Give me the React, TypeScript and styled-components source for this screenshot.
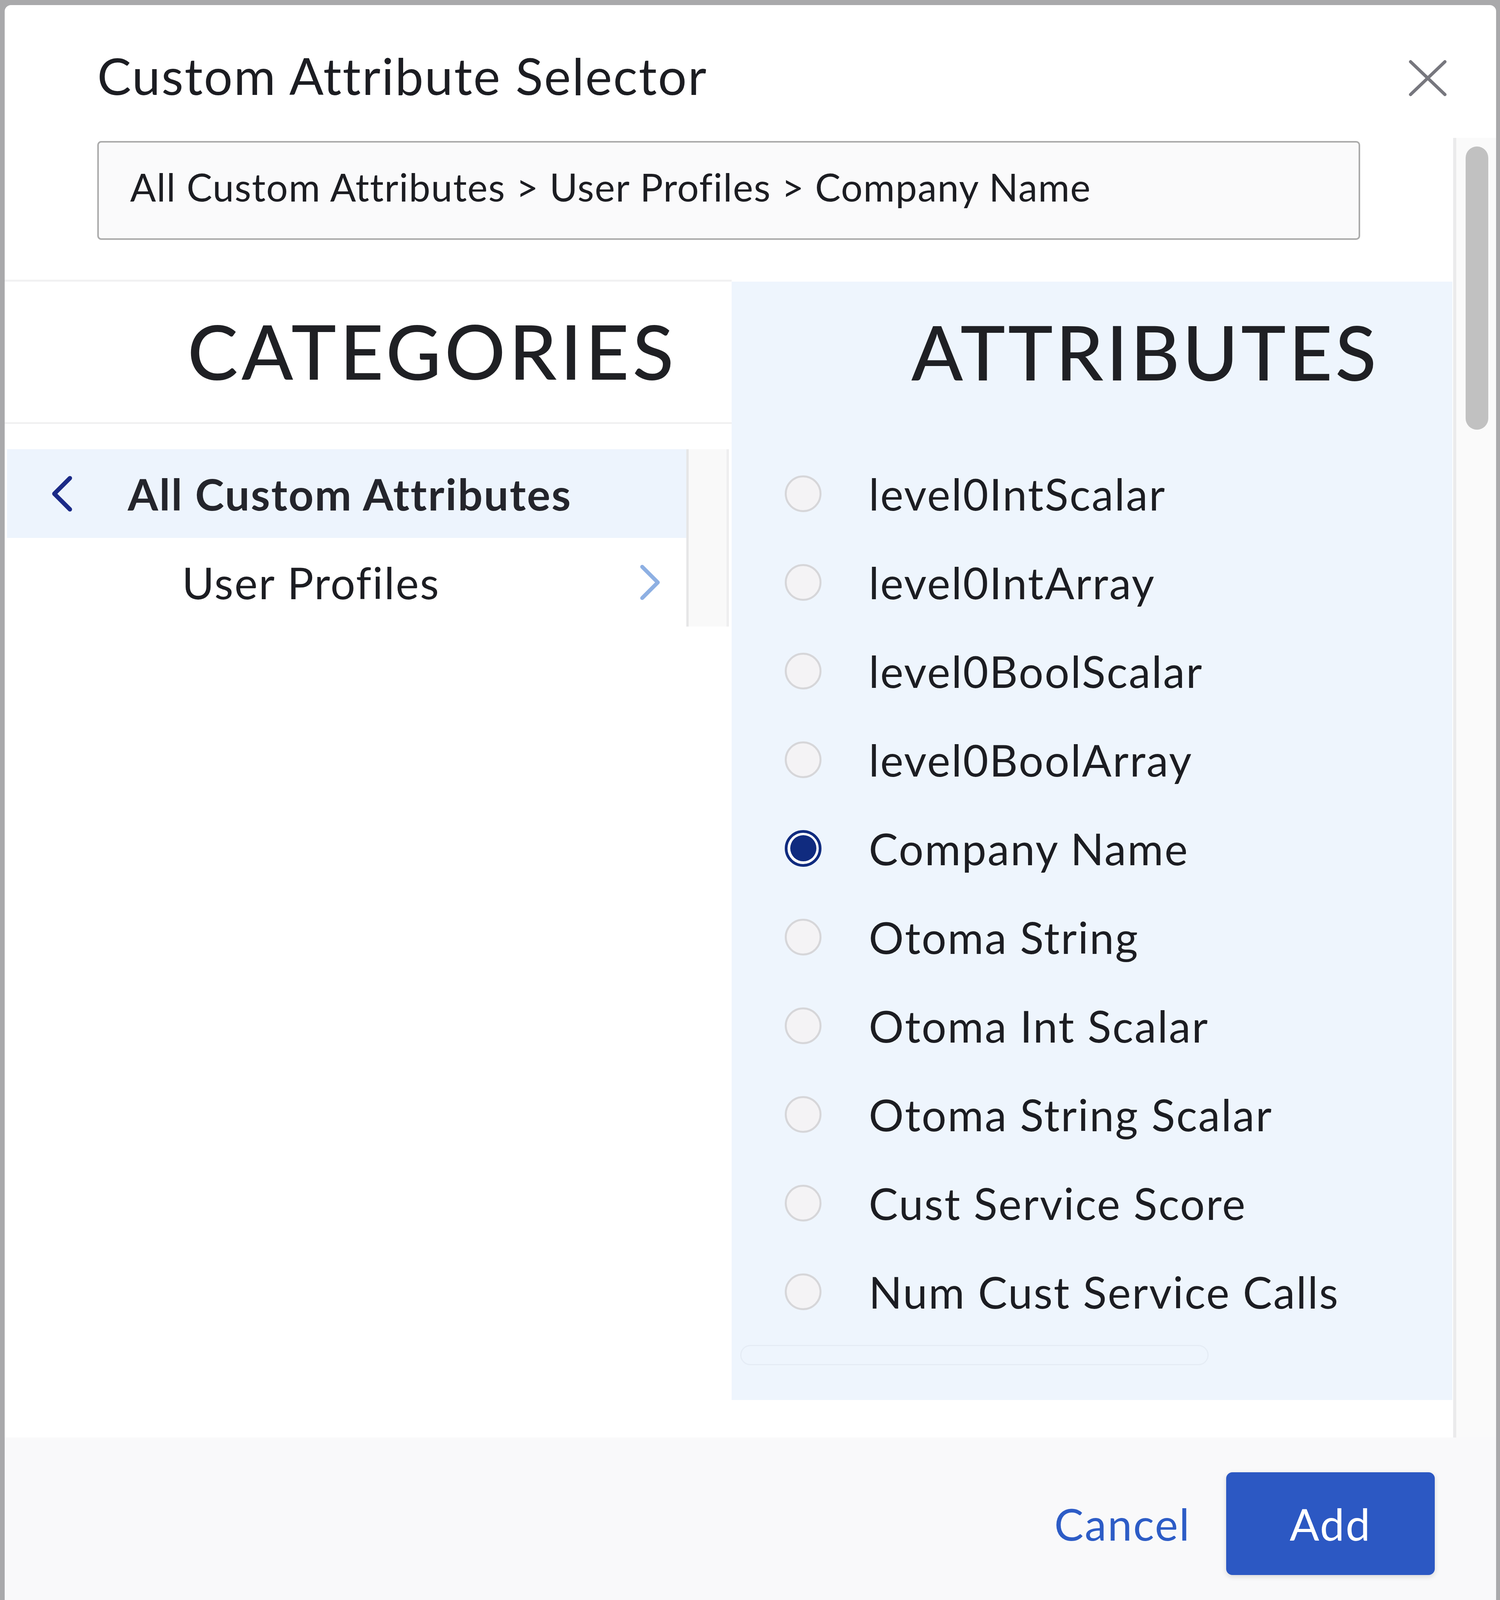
import styled, { createGlobalStyle } from 'styled-components'

const GlobalStyle = createGlobalStyle`
	html, body {
		margin: 0;
		padding: 0;
		background: #a9a9ab;
	}
	* {
		box-sizing: border-box;
	}
	body {
		font-family: Lato, 'Open Sans', 'Liberation Sans', sans-serif;
		color: #1c1d22;
	}
`

const Frame = styled.div`
	height: 100vh;
	padding: 13px 10px 0 12px;
	background: #a9a9ab;
	overflow: hidden;
`

const Modal = styled.div`
	height: 100%;
	background: #ffffff;
	border-radius: 16px 16px 0 0;
	display: flex;
	flex-direction: column;
`

const Header = styled.header`
	height: 340px;
	flex-shrink: 0;
	display: flex;
	align-items: center;
	justify-content: space-between;
	padding: 20px 126px 0 237px;
`

const Title = styled.h1`
	margin: 0;
	font-size: 130px;
	font-weight: 400;
	letter-spacing: 3px;
	color: #1c1d22;
`

const CloseButton = styled.button`
	width: 98px;
	height: 94px;
	padding: 0;
	border: 0;
	background: none;
	display: flex;
	margin-top: 14px;
`

const Main = styled.div`
	height: 3327px;
	flex-shrink: 0;
	display: flex;
`

const Content = styled.div`
	flex: 1;
	min-width: 0;
	display: flex;
	flex-direction: column;
`

const Breadcrumb = styled.div`
	margin: 8px 0 0 237px;
	width: 3233px;
	height: 253px;
	border: 4px solid #ababab;
	border-radius: 10px;
	background: #fafafb;
	display: flex;
	align-items: center;
	padding: 0 0 19px 80px;
	font-size: 98px;
	letter-spacing: 1.8px;
	color: #1c1d22;
`

const Columns = styled.div`
	margin-top: 102px;
	display: flex;
	align-items: flex-start;
`

const CategoryColumn = styled.section`
	width: 1861px;
	flex-shrink: 0;
	border-top: 5px solid #f1f1f2;
`

const AttributeColumn = styled.section`
	flex: 1;
	margin: 5px 2px 0 0;
	background: #eef5fd;
	padding-bottom: 89px;
`

const ColumnHeading = styled.h2<{ $indent: number; $divider?: boolean }>`
	margin: 0;
	height: ${({ $divider }) => ($divider ? 364 : 364)}px;
	display: flex;
	align-items: center;
	padding: 0 0 8px ${({ $indent }) => $indent}px;
	font-size: 194px;
	font-weight: 500;
	letter-spacing: ${({ $divider }) => ($divider ? 9 : 7)}px;
	color: #1f2024;
	border-bottom: ${({ $divider }) => ($divider ? '4px solid #efeff0' : '0')};
`

const CategoryList = styled.div`
	margin: 65px 7px 0 6px;
	display: flex;
`

const CategoryItems = styled.div`
	flex: 1;
	display: flex;
	flex-direction: column;
`

const CategoryRow = styled.div<{ $active?: boolean }>`
	height: 227px;
	display: flex;
	align-items: center;
	gap: 138px;
	padding: 0 63px 0 ${({ $active }) => ($active ? 109 : 448)}px;
	background: ${({ $active }) => ($active ? '#edf4fd' : 'transparent')};
	font-size: 112px;
	letter-spacing: 3px;
	font-weight: ${({ $active }) => ($active ? 700 : 400)};
	color: ${({ $active }) => ($active ? '#24252c' : '#1c1d22')};
`

const RowChevron = styled.svg`
	flex-shrink: 0;
	margin-left: auto;
`

const ListTrack = styled.div`
	width: 109px;
	flex-shrink: 0;
	border-left: 6px solid #e6e6e7;
	border-right: 6px solid #eeeeef;
	background: #f9f9f9;
`

const AttributeList = styled.div`
	margin-top: 65px;
	display: flex;
	flex-direction: column;
`

const AttributeRow = styled.label`
	height: 227px;
	display: flex;
	align-items: center;
	gap: 121px;
	padding-left: 136px;
	font-size: 112px;
	letter-spacing: 3px;
	color: #1c1d22;
`

const Radio = styled.span<{ $checked?: boolean }>`
	width: 94px;
	height: 94px;
	flex-shrink: 0;
	border-radius: 50%;
	border: ${({ $checked }) => ($checked ? '7px solid #102b7f' : '5px solid #d6d6d9')};
	background: ${({ $checked }) => ($checked ? '#ffffff' : '#f4f3f5')};
	display: flex;
	align-items: center;
	justify-content: center;

	&::after {
		content: '';
		display: ${({ $checked }) => ($checked ? 'block' : 'none')};
		width: 67px;
		height: 67px;
		border-radius: 50%;
		background: #102b7f;
	}
`

const Placeholder = styled.div`
	margin: 23px 0 0 22px;
	width: 1199px;
	height: 52px;
	border: 3px solid #e5ecf5;
	border-radius: 26px;
`

const ScrollTrack = styled.div`
	width: 110px;
	flex-shrink: 0;
	border-left: 8px solid #ebebec;
	background: #fafafa;
	padding: 22px 0 0 24px;
`

const ScrollThumb = styled.div`
	width: 58px;
	height: 725px;
	border-radius: 29px;
	background: #c1c1c1;
`

const Footer = styled.footer`
	flex: 1;
	background: #f9f9fa;
	display: flex;
	justify-content: flex-end;
	align-items: flex-start;
	gap: 91px;
	padding: 89px 157px 0 0;
`

const CancelButton = styled.button`
	height: 263px;
	padding: 0;
	border: 0;
	background: none;
	font-family: inherit;
	font-size: 112px;
	letter-spacing: 3px;
	color: #2d5cc6;
`

const AddButton = styled.button`
	width: 534px;
	height: 263px;
	border: 0;
	border-radius: 16px;
	background: #2c58c3;
	box-shadow: 0 4px 14px rgba(0, 0, 0, 0.14);
	font-family: inherit;
	font-size: 112px;
	letter-spacing: 3px;
	color: #ffffff;
`

const attributes = [
	'level0IntScalar',
	'level0IntArray',
	'level0BoolScalar',
	'level0BoolArray',
	'Company Name',
	'Otoma String',
	'Otoma Int Scalar',
	'Otoma String Scalar',
	'Cust Service Score',
	'Num Cust Service Calls',
]

const App = () => {
	return (
		<>
			<GlobalStyle />
			<Frame>
				<Modal>
					<Header>
						<Title>Custom Attribute Selector</Title>
						<CloseButton aria-label="Close">
							<svg width="98" height="94" viewBox="0 0 98 94">
								<path d="M5 5 L93 89 M93 5 L5 89" stroke="#77777e" strokeWidth="8" strokeLinecap="round" fill="none" />
							</svg>
						</CloseButton>
					</Header>
					<Main>
						<Content>
							<Breadcrumb>All Custom Attributes &gt; User Profiles &gt; Company Name</Breadcrumb>
							<Columns>
								<CategoryColumn>
									<ColumnHeading $indent={468} $divider>
										CATEGORIES
									</ColumnHeading>
									<CategoryList>
										<CategoryItems>
											<CategoryRow $active>
												<svg width="62" height="92" viewBox="0 0 62 92">
													<polyline
														points="52,6 12,46 52,86"
														stroke="#1b2a87"
														strokeWidth="11"
														strokeLinecap="round"
														strokeLinejoin="round"
														fill="none"
													/>
												</svg>
												All Custom Attributes
											</CategoryRow>
											<CategoryRow>
												User Profiles
												<RowChevron width="58" height="92" viewBox="0 0 58 92">
													<polyline
														points="8,6 48,46 8,86"
														stroke="#8eb0e3"
														strokeWidth="10"
														strokeLinecap="round"
														strokeLinejoin="round"
														fill="none"
													/>
												</RowChevron>
											</CategoryRow>
										</CategoryItems>
										<ListTrack />
									</CategoryList>
								</CategoryColumn>
								<AttributeColumn>
									<ColumnHeading $indent={460}>ATTRIBUTES</ColumnHeading>
									<AttributeList>
										{attributes.map((name) => (
											<AttributeRow key={name}>
												<Radio $checked={name === 'Company Name'} />
												{name}
											</AttributeRow>
										))}
									</AttributeList>
									<Placeholder />
								</AttributeColumn>
							</Columns>
						</Content>
						<ScrollTrack>
							<ScrollThumb />
						</ScrollTrack>
					</Main>
					<Footer>
						<CancelButton>Cancel</CancelButton>
						<AddButton>Add</AddButton>
					</Footer>
				</Modal>
			</Frame>
		</>
	)
}

export default App
